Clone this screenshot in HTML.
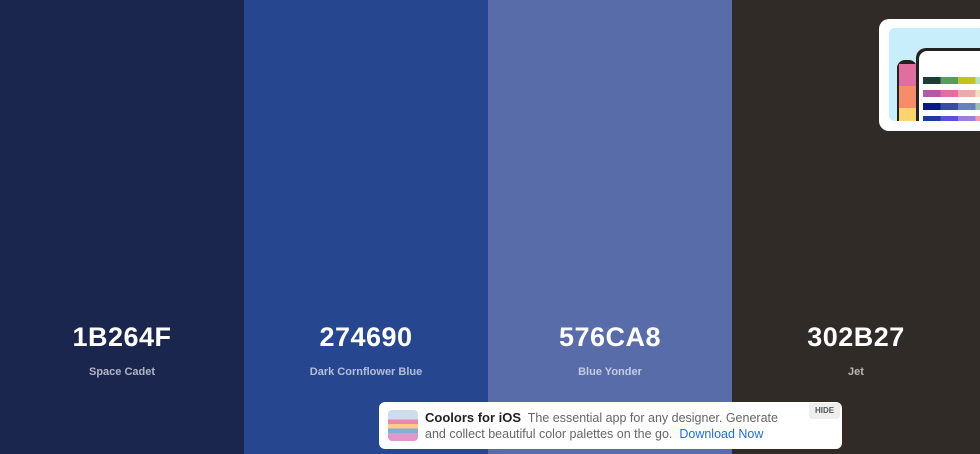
<!DOCTYPE html>
<html><head><style>
*{margin:0;padding:0;box-sizing:border-box}
body{width:980px;height:454px;overflow:hidden;font-family:"Liberation Sans",sans-serif;position:relative}
.c{position:absolute;top:0;height:454px;text-align:center;color:#fff}
.c h1{position:absolute;top:322px;width:100%;font-size:27px;font-weight:700;letter-spacing:0.5px}
.c p{position:absolute;top:366px;width:100%;font-size:11px;font-weight:700;color:rgba(255,255,255,.65)}
.pop{position:absolute;left:879px;top:19px;width:110px;height:112px;background:#fff;border-radius:10px}
.pi{position:absolute;left:10px;top:9px;width:95px;height:93px;background:#c9eefb;border-radius:5px;overflow:hidden}
.ban{position:absolute;left:379px;top:402px;width:463px;height:47px;background:#fff;border-radius:6px;font-size:12.5px;color:#666;line-height:16px}
</style></head><body>
<div class="c" style="left:0;width:244px;background:#1b264f"><h1>1B264F</h1><p>Space Cadet</p></div>
<div class="c" style="left:244px;width:244px;background:#274690"><h1>274690</h1><p>Dark Cornflower Blue</p></div>
<div class="c" style="left:488px;width:244px;background:#576ca8"><h1>576CA8</h1><p>Blue Yonder</p></div>
<div class="c" style="left:732px;width:248px;background:#302b27"><h1>302B27</h1><p>Jet</p></div>
<div class="pop"><div class="pi">
<div style="position:absolute;left:8px;top:32px;width:20px;height:70px;background:#222;border-radius:8px"></div>
<div style="position:absolute;left:10px;top:36px;width:18px;height:22px;background:#e06fa0"></div>
<div style="position:absolute;left:10px;top:58px;width:18px;height:22px;background:#f78c6b"></div>
<div style="position:absolute;left:10px;top:80px;width:18px;height:15px;background:#fbd46d"></div>
<div style="position:absolute;left:27px;top:20px;width:80px;height:90px;background:#222;border-radius:10px"></div>
<div style="position:absolute;left:30px;top:23px;width:75px;height:85px;background:#fff;border-radius:8px"></div>
<div style="position:absolute;left:34px;top:49px;width:70px;height:7px;background:linear-gradient(90deg,#1d3c34 0 25%,#5a9a5c 25% 50%,#c4c21c 50% 75%,#b8e0c8 75%)"></div>
<div style="position:absolute;left:34px;top:62px;width:70px;height:7px;background:linear-gradient(90deg,#b05aa8 0 25%,#e070a0 25% 50%,#eeaaaa 50% 75%,#f5e0b8 75%)"></div>
<div style="position:absolute;left:34px;top:75px;width:70px;height:7px;background:linear-gradient(90deg,#0a1a8a 0 25%,#3a4aa8 25% 50%,#6a80b8 50% 75%,#a0c0b0 75%)"></div>
<div style="position:absolute;left:34px;top:88px;width:70px;height:7px;background:linear-gradient(90deg,#1a3aa0 0 25%,#5a50e0 25% 50%,#9a80d8 50% 75%,#f0a0a0 75%)"></div>
</div></div>
<div class="ban">
<div style="position:absolute;left:9px;top:8px;width:30px;height:31px;border-radius:4px;background:linear-gradient(180deg,#cde 0 30%,#e8a 30% 45%,#fc8 45% 60%,#8ad 60% 75%,#d9c 75%)"></div>
<div style="position:absolute;left:46px;top:8px;width:370px"><b style="color:#222;font-weight:600;font-size:13px">Coolors for iOS</b>&nbsp; The essential app for any designer. Generate and collect beautiful color palettes on the go.&nbsp; <span style="color:#1e6fd9">Download Now</span></div>
<div style="position:absolute;right:2px;top:1px;width:31px;height:16px;background:#eee;border-radius:3px;font-size:8px;font-weight:700;color:#555;text-align:center;line-height:16px">HIDE</div>
</div>
</body></html>
